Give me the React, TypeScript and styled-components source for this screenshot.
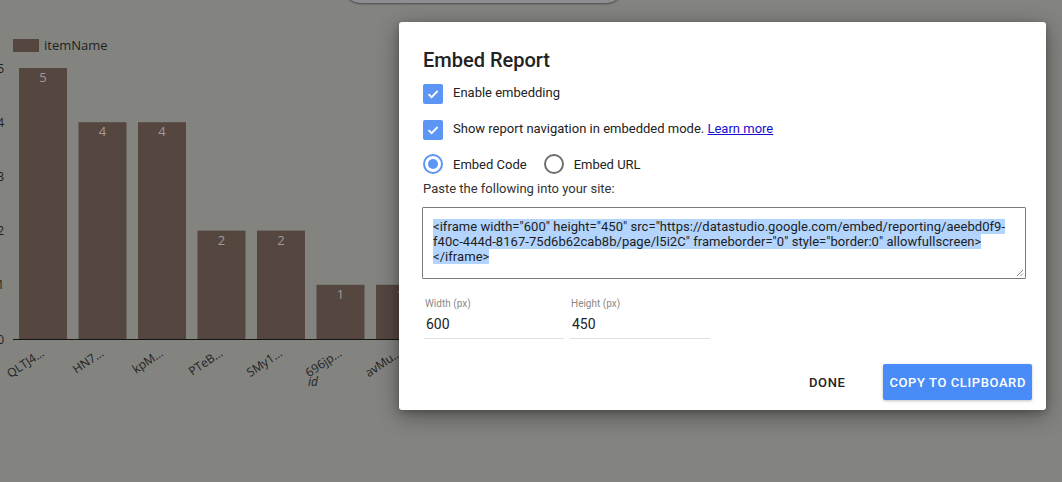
import React from 'react';
import styled, { createGlobalStyle } from 'styled-components';

const GlobalStyle = createGlobalStyle`
  html, body {
    margin: 0;
    padding: 0;
    width: 1062px;
    height: 482px;
    overflow: hidden;
    background: #838480;
  }
  body {
    font-family: Roboto, 'Liberation Sans', sans-serif;
  }
`;

interface Bar {
  id: string;
  value: number;
}

const BARS: Bar[] = [
  { id: 'QLTJ4…', value: 5 },
  { id: 'HN7…', value: 4 },
  { id: 'kpM…', value: 4 },
  { id: 'PTeB…', value: 2 },
  { id: 'SMy1…', value: 2 },
  { id: '696jp…', value: 1 },
  { id: 'avMu…', value: 1 },
  { id: 'b1Xr…', value: 1 },
  { id: 'c9Lk…', value: 1 },
  { id: 'dQw2…', value: 1 },
];

const ZERO_Y = 339;
const UNIT = 54.2;
const BAR_X = 19;
const PITCH = 59.5;
const BAR_W = 48;

const Page = styled.div`
  width: 1062px;
  height: 482px;
  display: flex;
  flex-direction: column;
  position: relative;
`;

const TopBar = styled.div`
  display: flex;
  padding-left: 345px;
  height: 0;
`;

const Pill = styled.div`
  width: 277px;
  height: 30px;
  margin-top: -27px;
  border-radius: 16px;
  background: #8d8e91;
  box-shadow: 0 1px 2px rgba(0, 0, 0, 0.45);
`;

const ChartSvg = styled.svg`
  display: block;
  font-family: 'Open Sans', 'Noto Sans', sans-serif;
`;

const Chart = () => (
  <ChartSvg width={1000} height={400} viewBox="0 0 1000 400">
    <rect x={13} y={39} width={26} height={13} fill="#554640" />
    <text x={44} y={49.5} fontSize={13} fill="#1f1f1f">
      itemName
    </text>
    {[0, 1, 2, 3, 4, 5].map((v) => (
      <text
        key={v}
        x={4}
        y={ZERO_Y - v * UNIT + 4.5}
        fontSize={12}
        fill="#1f1f1f"
        textAnchor="end"
      >
        {v}
      </text>
    ))}
    {BARS.map((b, i) => {
      const x = BAR_X + i * PITCH;
      const h = b.value * UNIT;
      const cx = x + BAR_W / 2;
      return (
        <g key={b.id + i}>
          <rect x={x} y={ZERO_Y - h} width={BAR_W} height={h} fill="#554640" />
          <text x={cx} y={ZERO_Y - h + 14} fontSize={13} fill="#a09a96" textAnchor="middle">
            {b.value}
          </text>
          <text
            x={cx + 2}
            y={355}
            fontSize={12}
            fill="#1f1f1f"
            textAnchor="end"
            transform={`rotate(-34 ${cx + 2} 355)`}
          >
            {b.id}
          </text>
        </g>
      );
    })}
    <line x1={13} y1={ZERO_Y + 0.5} x2={1000} y2={ZERO_Y + 0.5} stroke="#151515" strokeWidth={1} />
    <text x={313} y={386} fontSize={12} fill="#1f1f1f" fontStyle="italic" textAnchor="middle">
      id
    </text>
  </ChartSvg>
);

const Dialog = styled.div`
  position: absolute;
  left: 399px;
  top: 22px;
  width: 647px;
  box-sizing: border-box;
  padding: 24px 14px 10px 24px;
  background: #fff;
  border-radius: 3px;
  box-shadow: 0 6px 22px rgba(0, 0, 0, 0.38), 0 2px 6px rgba(0, 0, 0, 0.2);
  display: flex;
  flex-direction: column;
  color: #212121;
`;

const Title = styled.h2`
  margin: 0;
  font-size: 20px;
  line-height: 28px;
  font-weight: 500;
  color: #222;
`;

const OptionRow = styled.label<{ $gap: number }>`
  display: flex;
  align-items: center;
  gap: 10px;
  height: 20px;
  margin-top: ${(p) => p.$gap}px;
  font-size: 13px;
  color: #222;
`;

const OptionText = styled.span`
  margin-top: -3px;
`;

const Box = styled.span`
  width: 20px;
  height: 20px;
  border-radius: 2px;
  background: #5b95f6;
  display: flex;
  align-items: center;
  justify-content: center;
  flex: none;
`;

const Link = styled.a`
  color: #1a0dd3;
  text-decoration: underline;
`;

const Radio = styled.span<{ $on?: boolean }>`
  width: 16px;
  height: 16px;
  border-radius: 50%;
  border: 2px solid ${(p) => (p.$on ? '#5b95f6' : '#6e6e6e')};
  display: flex;
  align-items: center;
  justify-content: center;
  flex: none;

  &::after {
    content: '';
    width: 10px;
    height: 10px;
    border-radius: 50%;
    background: ${(p) => (p.$on ? '#5b95f6' : 'transparent')};
  }
`;

const RadioItem = styled.span`
  display: flex;
  align-items: center;
  gap: 10px;
  margin-right: 7px;
`;

const Hint = styled.div`
  margin-top: 7px;
  font-size: 13px;
  line-height: 16px;
  color: #333;
`;

const CodeBox = styled.div`
  position: relative;
  margin: 10px 0 0 -1px;
  width: 604px;
  height: 72px;
  box-sizing: border-box;
  border: 1px solid #7b7b7b;
  border-radius: 1px;
  padding: 11px 10px 0 10px;
  font-size: 13px;
  line-height: 15px;
  color: #1d1d1d;
  letter-spacing: 0.05px;
  word-break: break-word;
`;

const Selected = styled.span`
  background: #b3d4fc;
`;

const Grip = styled.svg`
  position: absolute;
  right: 1px;
  bottom: 1px;
`;

const Fields = styled.div`
  display: flex;
  gap: 6px;
  margin-top: 19px;
  margin-left: 1px;
`;

const Field = styled.div`
  width: 140px;
  display: flex;
  flex-direction: column;
  border-bottom: 1px solid #e0e0e0;
  padding-bottom: 4px;
`;

const FieldLabel = styled.span`
  font-size: 10px;
  line-height: 12px;
  color: #8a8a8a;
  padding-left: 1px;
`;

const FieldValue = styled.span`
  margin-top: 4px;
  font-size: 14px;
  line-height: 20px;
  color: #222;
  padding-left: 2px;
`;

const Actions = styled.div`
  display: flex;
  justify-content: flex-end;
  align-items: center;
  gap: 20px;
  margin-top: 25px;
`;

const Button = styled.button<{ $primary?: boolean }>`
  height: 36px;
  padding: 0 ${(p) => (p.$primary ? 6 : 18)}px;
  border: none;
  border-radius: 2px;
  font-family: Roboto, 'Liberation Sans', sans-serif;
  font-size: 13px;
  font-weight: 500;
  text-transform: uppercase;
  letter-spacing: 0.6px;
  background: ${(p) => (p.$primary ? '#4a8cf7' : 'transparent')};
  color: ${(p) => (p.$primary ? '#fff' : '#222')};
  box-shadow: ${(p) => (p.$primary ? '0 1px 3px rgba(0,0,0,0.25)' : 'none')};
`;

const Check = () => (
  <svg width="14" height="14" viewBox="0 0 14 14">
    <path d="M2.5 7.2 L5.6 10.2 L11.6 4" fill="none" stroke="#fff" strokeWidth="1.8" />
  </svg>
);

const CODE =
  '<iframe width="600" height="450" src="https://datastudio.google.com/embed/reporting/aeebd0f9-f40c-444d-8167-75d6b62cab8b/page/l5i2C" frameborder="0" style="border:0" allowfullscreen></iframe>';

export default function App() {
  return (
    <>
      <GlobalStyle />
      <Page>
        <TopBar>
          <Pill />
        </TopBar>
        <Chart />
        <Dialog>
          <Title>Embed Report</Title>
          <OptionRow $gap={10}>
            <Box>
              <Check />
            </Box>
            <OptionText>Enable embedding</OptionText>
          </OptionRow>
          <OptionRow $gap={16}>
            <Box>
              <Check />
            </Box>
            <OptionText>
              Show report navigation in embedded mode. <Link href="#">Learn more</Link>
            </OptionText>
          </OptionRow>
          <OptionRow $gap={14} as="div">
            <RadioItem>
              <Radio $on />
              Embed Code
            </RadioItem>
            <RadioItem>
              <Radio />
              Embed URL
            </RadioItem>
          </OptionRow>
          <Hint>Paste the following into your site:</Hint>
          <CodeBox>
            <Selected>{CODE}</Selected>
            <Grip width="8" height="8" viewBox="0 0 8 8">
              <path d="M7 1 L1 7 M7 4.5 L4.5 7" stroke="#888" strokeWidth="1" />
            </Grip>
          </CodeBox>
          <Fields>
            <Field>
              <FieldLabel>Width (px)</FieldLabel>
              <FieldValue>600</FieldValue>
            </Field>
            <Field>
              <FieldLabel>Height (px)</FieldLabel>
              <FieldValue>450</FieldValue>
            </Field>
          </Fields>
          <Actions>
            <Button>Done</Button>
            <Button $primary>Copy to clipboard</Button>
          </Actions>
        </Dialog>
      </Page>
    </>
  );
}
